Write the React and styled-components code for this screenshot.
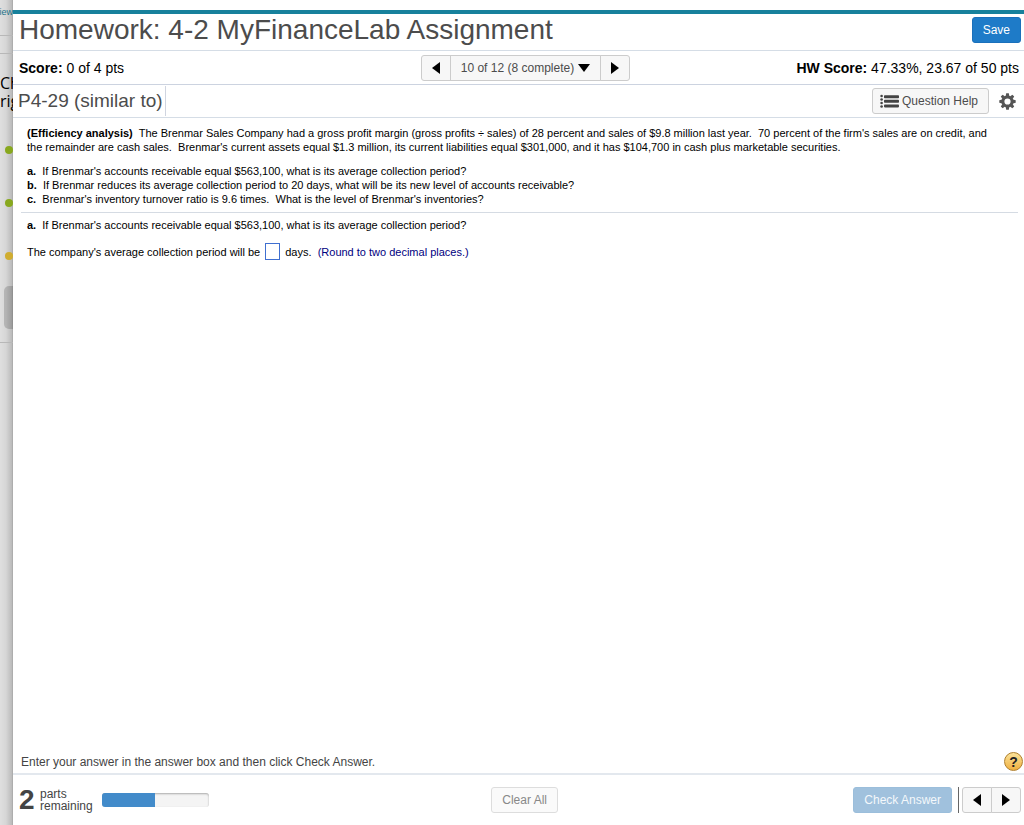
import React, { useState } from "react";
import styled, { createGlobalStyle, css } from "styled-components";

const GlobalStyle = createGlobalStyle`
  * {
    box-sizing: border-box;
  }

  body {
    margin: 0;
    background: #fff;
    color: #000;
    font-family: "Liberation Sans", Arial, sans-serif;
    font-size: 13px;
  }
`;

const Page = styled.div`
  display: flex;
  min-height: 100vh;
`;

const Backdrop = styled.aside`
  flex: 0 0 13px;
  overflow: hidden;
  background: linear-gradient(to right, #dfdfdf 0, #d6d6d6 6px, #bababa 12px, #a0a0a0 13px);
`;

const BackdropLink = styled.a`
  display: flex;
  justify-content: flex-end;
  height: 36px;
  padding-top: 5px;
  border-bottom: 1px solid #b8b8b8;
  color: #1b7288;
  font-family: "Liberation Sans", Arial, sans-serif;
  font-size: 9px;
  line-height: 14px;
  text-decoration: none;
`;

const BackdropRule = styled.div`
  height: ${props => props.$height}px;
  border-bottom: 1px solid #b8b8b8;
`;

const BackdropText = styled.p`
  margin: 0;
  padding-top: 20px;
  height: 92px;
  font-family: "Open Sans", sans-serif;
  font-size: 16px;
  line-height: 18px;
  white-space: nowrap;
`;

const Dot = styled.div`
  width: 8px;
  height: 8px;
  margin: 0 0 45px 5px;
  border-radius: 50%;
  background: ${props => props.$color};
`;

const Handle = styled.div`
  height: 43px;
  margin: -19px 0 0 4px;
  border-radius: 5px 0 0 5px;
  background: rgba(0, 0, 0, 0.16);
`;

const Main = styled.main`
  flex: 1;
  min-width: 0;
  display: flex;
  flex-direction: column;
  padding-top: 10px;
`;

const TitleBar = styled.header`
  display: flex;
  align-items: center;
  justify-content: space-between;
  height: 41px;
  padding: 0 3px 4px 6px;
  border-top: 4px solid #17819c;
  border-bottom: 1px solid #d5dde6;
`;

const Title = styled.h1`
  margin: 0;
  color: #4c4c4c;
  font-size: 28px;
  font-weight: normal;
  line-height: 32px;
`;

const Button = styled.button`
  height: 26px;
  padding: 0 10px;
  border: 1px solid #ccc;
  border-radius: 3px;
  background: #f7f7f7;
  color: #4c4c4c;
  font-family: inherit;
  font-size: 12px;
  line-height: 16px;
  cursor: pointer;

  ${props =>
    props.$primary &&
    css`
      border-color: #1a70bb;
      background: #1e7bc8;
      color: #fff;
    `}

  &:disabled {
    border-color: #ddd;
    background: #fafafa;
    color: #888;
    cursor: default;
    ${props =>
      props.$primary &&
      css`
        border-color: #9bbedb;
        background: #a0c1dd;
        color: #f4f8fb;
      `}
  }
`;

const HelpButton = styled(Button)`
  display: flex;
  align-items: center;
  gap: 3px;
  padding: 0 10px 0 7px;
`;

const ScoreBar = styled.div`
  display: grid;
  grid-template-columns: 31fr auto 30fr;
  align-items: center;
  height: 34px;
  padding: 0 5px 0 6px;
  border-bottom: 1px solid #ccd3e0;
  font-size: 14px;
`;

const Score = styled.div`
  text-align: ${props => (props.$right ? "right" : "left")};
`;

const ButtonGroup = styled.div`
  display: flex;

  ${Button} {
    display: flex;
    align-items: center;
    justify-content: center;
    gap: 4px;
    min-width: 30px;
    padding: 0 ${props => (props.$wide ? 10 : 8)}px;
    border-radius: 0;
  }

  ${Button} + ${Button} {
    margin-left: -1px;
  }

  ${Button}:first-child {
    padding: 0 8px;
    border-radius: 3px 0 0 3px;
  }

  ${Button}:last-child {
    padding: 0 8px;
    border-radius: 0 3px 3px 0;
  }
`;

const QuestionBar = styled.div`
  display: flex;
  align-items: center;
  height: 33px;
  padding-right: 8px;
  border-bottom: 1px solid #d5dde6;
`;

const QuestionName = styled.h2`
  margin: 0 auto 0 0;
  padding: 0 2px 0 5px;
  border-right: 1px solid #d0d5e0;
  color: #4c4c4c;
  font-size: 19px;
  font-weight: normal;
  line-height: 30px;
`;

const IconButton = styled.button`
  display: flex;
  margin-left: 10px;
  padding: 0;
  border: 0;
  background: none;
  cursor: pointer;
`;

const Question = styled.section`
  flex: 1;
  padding: 8px 6px 0 8px;
  font-size: 11px;
  line-height: 14px;
`;

const Paragraph = styled.p`
  margin: 0;
  padding: 0 20px 0 6px;
`;

const Parts = styled.ul`
  margin: 10px 0 6px;
  padding: 0 6px;
  list-style: none;
`;

const Divider = styled.hr`
  margin: 0 0 5px;
  border: 0;
  border-top: 1px solid #d5dbe3;
`;

const AnswerLine = styled.div`
  display: flex;
  align-items: center;
  padding: 11px 6px;
`;

const AnswerInput = styled.input`
  width: 15px;
  height: 17px;
  margin: 0 5px;
  padding: 0;
  border: 1px solid #3f6fd0;
  background: #fff;
  font: inherit;
`;

const Hint = styled.span`
  color: #000080;
`;

const Instructions = styled.div`
  display: flex;
  align-items: center;
  justify-content: space-between;
  height: 23px;
  padding: 0 1px 0 8px;
  color: #444;
  font-size: 12px;
`;

const Footer = styled.footer`
  display: grid;
  grid-template-columns: 51fr auto 50fr;
  align-items: center;
  height: 52px;
  padding: 0 3px 0 6px;
  border-top: 2px solid #e3e8ee;
`;

const Remaining = styled.div`
  display: flex;
  align-items: center;
  color: #444;
  font-size: 12px;
  line-height: 12px;
`;

const Count = styled.strong`
  width: 21px;
  font-size: 28px;
  line-height: 28px;
`;

const Progress = styled.div`
  width: 107px;
  height: 14px;
  margin-left: 9px;
  overflow: hidden;
  border-radius: 3px;
  background: #f4f4f4;
  box-shadow: inset 0 1px 2px rgba(0, 0, 0, 0.3);
`;

const ProgressFill = styled.div`
  height: 100%;
  background: #428bca;
`;

const Actions = styled.div`
  display: flex;
  align-items: center;
  justify-content: flex-end;
`;

const Separator = styled.div`
  width: 1px;
  height: 26px;
  margin: 0 3px 0 6px;
  background: #666;
`;

const arrows = {
  left: "M10 1v12L2 7z",
  right: "M2 1v12l8-6z",
  down: "M0 3h12L6 11z"
};

const Arrow = ({ to }) => (
  <svg width="12" height="14" viewBox="0 0 12 14" aria-hidden="true">
    <path d={arrows[to]} fill="#000" />
  </svg>
);

const ListIcon = () => (
  <svg width="19" height="14" viewBox="0 0 19 14" fill="#444" aria-hidden="true">
    {[2, 5.5, 9, 12.5].map(y => (
      <circle key={y} cx="1.6" cy={y} r="1.3" />
    ))}
    {[1.2, 5.8, 10.4].map(y => (
      <rect key={y} x="4" y={y} width="15" height="3" rx="0.8" />
    ))}
  </svg>
);

const GearIcon = () => (
  <svg width="17" height="17" viewBox="-8.5 -8.5 17 17" aria-hidden="true">
    <circle r="4.6" fill="none" stroke="#555" strokeWidth="3" />
    {[0, 45, 90, 135, 180, 225, 270, 315].map(angle => (
      <path
        key={angle}
        d="M-1.9-5.3L-1.3-8.2H1.3L1.9-5.3z"
        fill="#555"
        transform={`rotate(${angle})`}
      />
    ))}
  </svg>
);

const Help = styled.button`
  width: 19px;
  height: 19px;
  padding: 0;
  border: 1px solid #b07f2c;
  border-radius: 50%;
  background: linear-gradient(#fbe39a, #f0b040);
  color: #222;
  font-family: inherit;
  font-size: 14px;
  font-weight: bold;
  line-height: 16px;
`;

const questionParts = [
  ["a.", "If Brenmar's accounts receivable equal $563,100, what is its average collection period?"],
  ["b.", "If Brenmar reduces its average collection period to 20 days, what will be its new level of accounts receivable?"],
  ["c.", "Brenmar's inventory turnover ratio is 9.6 times.\u00a0 What is the level of Brenmar's inventories?"]
];

const Part = ({ label, text }) => (
  <>
    <b>{label}</b>
    {"\u00a0 "}
    {text}
  </>
);

const App = () => {
  const [answer, setAnswer] = useState("");

  return (
    <Page>
      <GlobalStyle />
      <Backdrop>
        <BackdropLink href="#view">View</BackdropLink>
        <BackdropRule $height={18} />
        <BackdropText>
          Ch
          <br />
          rig
        </BackdropText>
        <Dot $color="#88a81e" />
        <Dot $color="#88a81e" />
        <Dot $color="#d0ad30" />
        <Handle />
        <BackdropRule $height={14} />
      </Backdrop>
      <Main>
        <TitleBar>
          <Title>Homework: 4-2 MyFinanceLab Assignment</Title>
          <Button $primary>Save</Button>
        </TitleBar>
        <ScoreBar>
          <Score>
            <b>Score:</b> 0 of 4 pts
          </Score>
          <ButtonGroup $wide>
            <Button aria-label="Previous question">
              <Arrow to="left" />
            </Button>
            <Button>
              10 of 12 (8 complete)
              <Arrow to="down" />
            </Button>
            <Button aria-label="Next question">
              <Arrow to="right" />
            </Button>
          </ButtonGroup>
          <Score $right>
            <b>HW Score:</b> 47.33%, 23.67 of 50 pts
          </Score>
        </ScoreBar>
        <QuestionBar>
          <QuestionName>P4-29 (similar to)</QuestionName>
          <HelpButton>
            <ListIcon />
            Question Help
          </HelpButton>
          <IconButton aria-label="Settings">
            <GearIcon />
          </IconButton>
        </QuestionBar>
        <Question>
          <Paragraph>
            <b>(Efficiency analysis)</b>
            {"\u00a0 "}The Brenmar Sales Company had a gross profit margin (gross
            profits ÷ sales) of 28 percent and sales of $9.8 million last
            year.{"\u00a0 "}70 percent of the firm's sales are on credit, and the
            remainder are cash sales.{"\u00a0 "}Brenmar's current assets equal $1.3
            million, its current liabilities equal $301,000, and it has $104,700
            in cash plus marketable securities.
          </Paragraph>
          <Parts>
            {questionParts.map(([label, text]) => (
              <li key={label}>
                <Part label={label} text={text} />
              </li>
            ))}
          </Parts>
          <Divider />
          <Paragraph>
            <Part label={questionParts[0][0]} text={questionParts[0][1]} />
          </Paragraph>
          <AnswerLine>
            <label htmlFor="answer">
              The company's average collection period will be
            </label>
            <AnswerInput
              id="answer"
              value={answer}
              onChange={e => setAnswer(e.target.value)}
            />
            <span>
              days.{"\u00a0 "}
              <Hint>(Round to two decimal places.)</Hint>
            </span>
          </AnswerLine>
        </Question>
        <Instructions>
          Enter your answer in the answer box and then click Check Answer.
          <Help aria-label="Help">?</Help>
        </Instructions>
        <Footer>
          <Remaining>
            <Count>2</Count>
            <span>
              parts
              <br />
              remaining
            </span>
            <Progress>
              <ProgressFill style={{ width: "50%" }} />
            </Progress>
          </Remaining>
          <Button disabled>Clear All</Button>
          <Actions>
            <Button $primary disabled>
              Check Answer
            </Button>
            <Separator />
            <ButtonGroup>
              <Button aria-label="Previous">
                <Arrow to="left" />
              </Button>
              <Button aria-label="Next">
                <Arrow to="right" />
              </Button>
            </ButtonGroup>
          </Actions>
        </Footer>
      </Main>
    </Page>
  );
};

export default App;
